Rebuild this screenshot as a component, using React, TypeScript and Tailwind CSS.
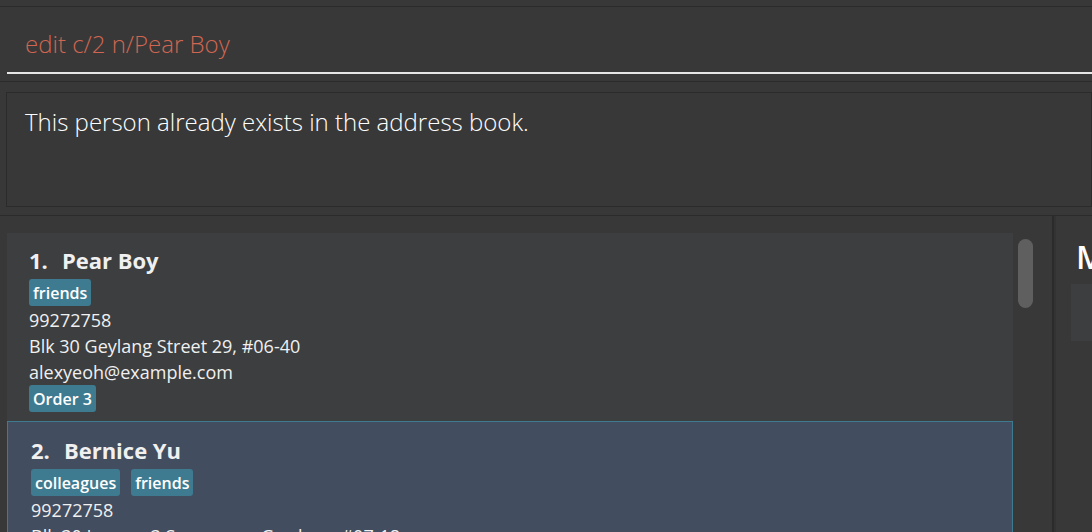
import React from "react";

type Person = {
  id: number;
  name: string;
  tags: string[];
  phone: string;
  address: string;
  email: string;
  orders: string[];
};

const people: Person[] = [
  {
    id: 1,
    name: "Pear Boy",
    tags: ["friends"],
    phone: "99272758",
    address: "Blk 30 Geylang Street 29, #06-40",
    email: "alexyeoh@example.com",
    orders: ["Order 3"],
  },
  {
    id: 2,
    name: "Bernice Yu",
    tags: ["colleagues", "friends"],
    phone: "99272758",
    address: "Blk 30 Lorong 3 Serangoon Gardens, #07-18",
    email: "berniceyu@example.com",
    orders: [],
  },
];

const font = { fontFamily: '"Open Sans", "Noto Sans", sans-serif' };

const Tag = ({ label }: { label: string }) => (
  <span className="inline-flex h-[27px] items-center rounded-[3px] bg-[#3e7b91] px-[4px] text-[16px] font-semibold text-white">
    {label}
  </span>
);

const PersonCard = ({ person, selected }: { person: Person; selected?: boolean }) => (
  <div
    className={
      selected
        ? "border border-[#3e7b91] bg-[#424d5f] pb-[9px] pl-[23px] pt-[13px]"
        : "bg-[#3c3e3f] pb-[9px] pl-[22px] pt-[12px]"
    }
  >
    <div className="flex h-[30px] items-center gap-[14px] text-[22px] font-bold text-[#f0f0f0]">
      <span>{person.id}.</span>
      <span>{person.name}</span>
    </div>
    <div className="mt-[4px] flex gap-[11px]">
      {person.tags.map((t) => (
        <Tag key={t} label={t} />
      ))}
    </div>
    <div className="mt-[1px] text-[18px] leading-[26px] text-[#f0f0f0]">
      <div>{person.phone}</div>
      <div>{person.address}</div>
      <div>{person.email}</div>
    </div>
    {person.orders.length > 0 && (
      <div className="flex gap-[11px]">
        {person.orders.map((o) => (
          <Tag key={o} label={o} />
        ))}
      </div>
    )}
  </div>
);

export default function App() {
  return (
    <div
      className="flex h-[532px] w-[1092px] flex-col overflow-hidden bg-[#383838]"
      style={font}
    >
      {/* top strip */}
      <div className="h-[7px] shrink-0 border-b border-[#2b2b2b]" />

      {/* command box */}
      <div className="h-[75px] shrink-0 border-b border-[#2b2b2b] pl-[7px]">
        <div className="border-b-2 border-[#e6e6e6] pb-[12px] pl-[18px] pt-[21px]">
          <div className="text-[24px] font-light leading-[32px] text-[#d06651]">
            edit c/2 n/Pear Boy
          </div>
        </div>
      </div>

      {/* result display */}
      <div className="h-[134px] shrink-0 border-b border-[#2b2b2b] pl-[6px] pt-[10px]">
        <div className="h-[115px] border border-[#2b2b2b] pl-[18px] pt-[13px]">
          <div className="text-[24px] font-light leading-[32px] text-white">
            This person already exists in the address book.
          </div>
        </div>
      </div>

      {/* lower panes */}
      <div className="flex min-h-0 flex-1">
        <div className="flex w-[1052px] shrink-0 pt-[17px]">
          <div className="ml-[7px] flex w-[1006px] shrink-0 flex-col">
            {people.map((p, i) => (
              <PersonCard key={p.id} person={p} selected={i === 1} />
            ))}
          </div>
          <div className="ml-[5px] mt-[6px] h-[69px] w-[15px] rounded-full bg-[#5f5f5f]" />
        </div>

        <div className="w-[4px] shrink-0 border-l-2 border-[#2b2b2b] bg-[#333333]" />

        <div className="flex-1 overflow-hidden pl-[15px] pt-[23px]">
          <div className="h-[36px] whitespace-nowrap pl-[5px] text-[32px] font-semibold leading-[36px] text-white">
            Meetings
          </div>
          <div className="mt-[9px] h-[57px] bg-[#3c3e3f]" />
        </div>
      </div>
    </div>
  );
}
